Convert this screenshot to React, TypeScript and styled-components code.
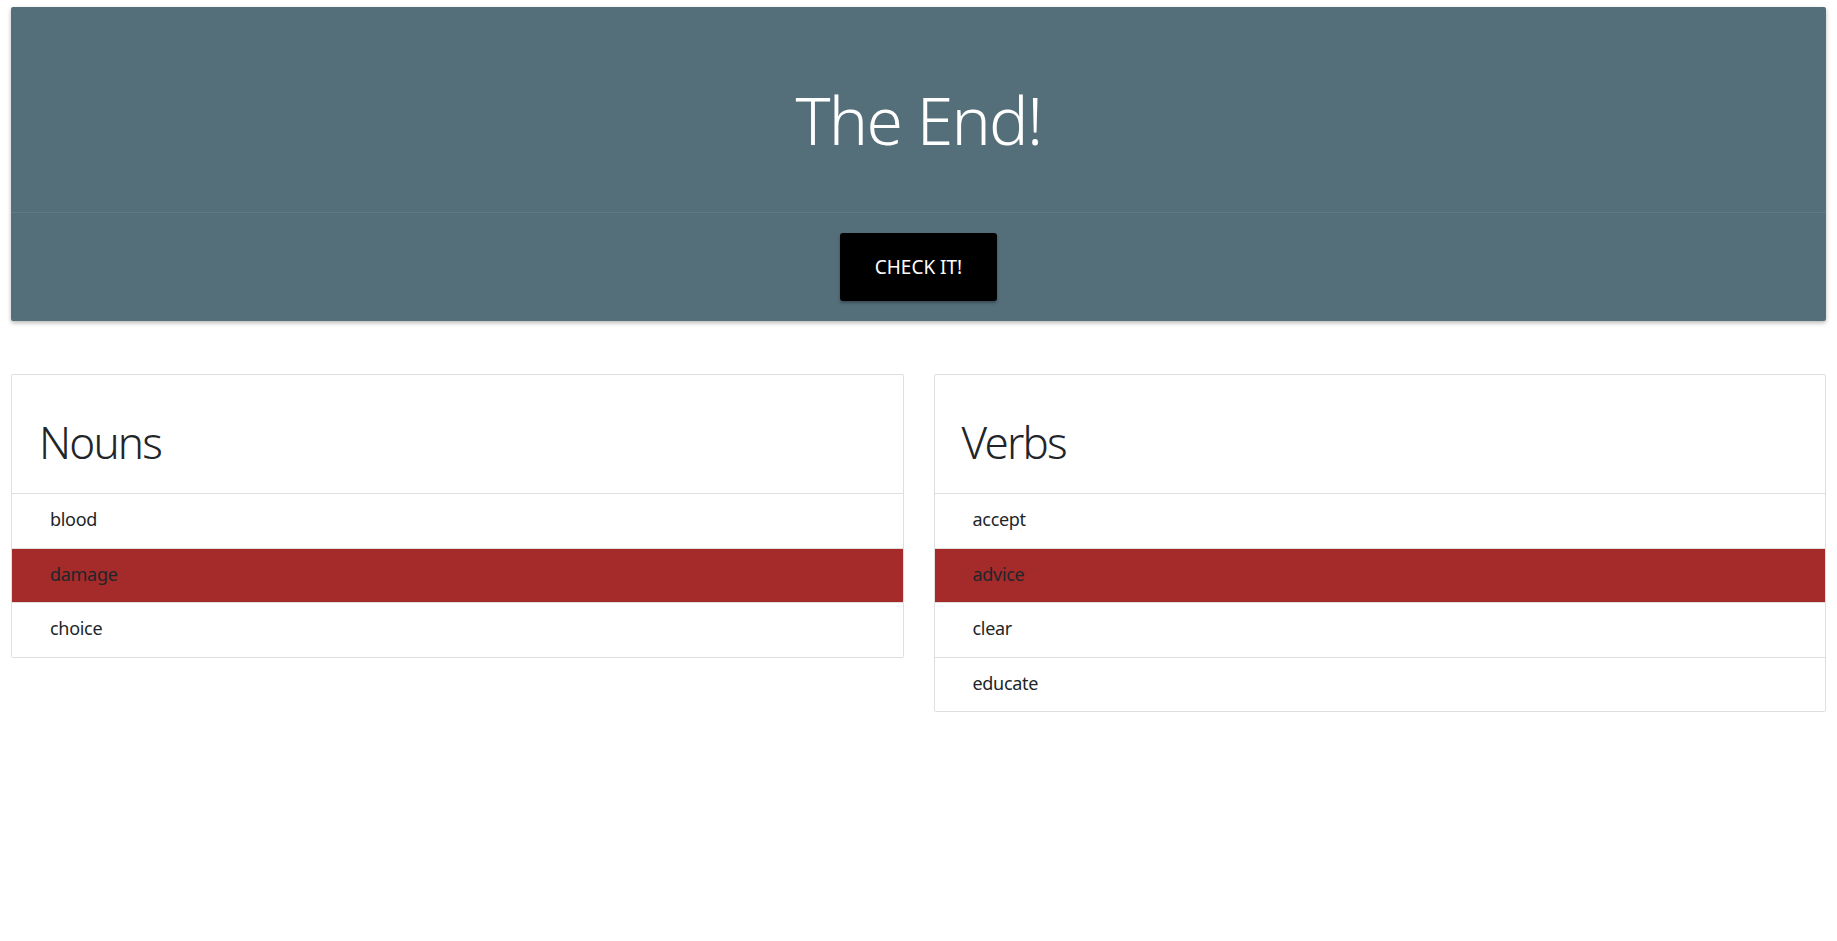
import React from "react";
import styled, { createGlobalStyle } from "styled-components";

const Global = createGlobalStyle`
  html, body { margin: 0; padding: 0; background: #fff; }
  body { font-family: "Noto Sans", "Open Sans", sans-serif; color: #212529; }
  * { box-sizing: border-box; }
`;

const Page = styled.div`
  padding: 7px 11px 40px 11px;
  display: flex;
  flex-direction: column;
  gap: 53px;
`;

const Banner = styled.header`
  background: #546e7a;
  border-radius: 2px;
  box-shadow: 0 2px 4px rgba(0, 0, 0, 0.28);
  display: flex;
  flex-direction: column;
`;

const BannerTop = styled.div`
  padding: 72px 16px 53px;
  display: flex;
  justify-content: center;
`;

const Title = styled.h1`
  margin: 0;
  font-size: 66px;
  line-height: 80px;
  letter-spacing: -1.7px;
  font-weight: 350;
  color: #fff;
`;

const BannerBottom = styled.div`
  border-top: 1px solid rgba(255, 255, 255, 0.08);
  padding: 20px 16px 20px;
  display: flex;
  justify-content: center;
`;

const CheckButton = styled.button`
  background: #000;
  color: #fff;
  border: none;
  border-radius: 3px;
  box-shadow: 0 2px 3px rgba(0, 0, 0, 0.3);
  font-family: inherit;
  font-size: 19px;
  line-height: 28px;
  padding: 20px 31px;
  min-width: 157px;
  cursor: pointer;
`;

const Columns = styled.div`
  display: grid;
  grid-template-columns: 1fr 1fr;
  gap: 30px;
  align-items: start;
`;

const Card = styled.section`
  border: 1px solid #dfdfdf;
  border-radius: 2px;
  background: #fff;
  display: flex;
  flex-direction: column;
`;

const CardHeader = styled.div`
  padding: 41px 27px 24px;
  border-bottom: 1px solid #dfdfdf;
`;

const CardTitle = styled.h2`
  margin: 0;
  font-size: 44px;
  line-height: 53px;
  letter-spacing: -1.8px;
  font-weight: 330;
  color: #212529;
`;

const List = styled.ul`
  list-style: none;
  margin: 0;
  padding: 0;
`;

const Item = styled.li<{ $wrong?: boolean }>`
  padding: 11px 38px 13px;
  font-size: 18px;
  line-height: 29.5px;
  letter-spacing: -0.3px;
  color: #212529;
  background: ${(p) => (p.$wrong ? "#a52a2a" : "#fff")};
  & + & {
    border-top: 1px solid #dfdfdf;
  }
`;

type Word = { text: string; wrong?: boolean };

const groups: { title: string; words: Word[] }[] = [
  {
    title: "Nouns",
    words: [{ text: "blood" }, { text: "damage", wrong: true }, { text: "choice" }],
  },
  {
    title: "Verbs",
    words: [
      { text: "accept" },
      { text: "advice", wrong: true },
      { text: "clear" },
      { text: "educate" },
    ],
  },
];

export default function App() {
  return (
    <>
      <Global />
      <Page>
        <Banner>
          <BannerTop>
            <Title>The End!</Title>
          </BannerTop>
          <BannerBottom>
            <CheckButton>CHECK IT!</CheckButton>
          </BannerBottom>
        </Banner>
        <Columns>
          {groups.map((g) => (
            <Card key={g.title}>
              <CardHeader>
                <CardTitle>{g.title}</CardTitle>
              </CardHeader>
              <List>
                {g.words.map((w) => (
                  <Item key={w.text} $wrong={w.wrong}>
                    {w.text}
                  </Item>
                ))}
              </List>
            </Card>
          ))}
        </Columns>
      </Page>
    </>
  );
}
